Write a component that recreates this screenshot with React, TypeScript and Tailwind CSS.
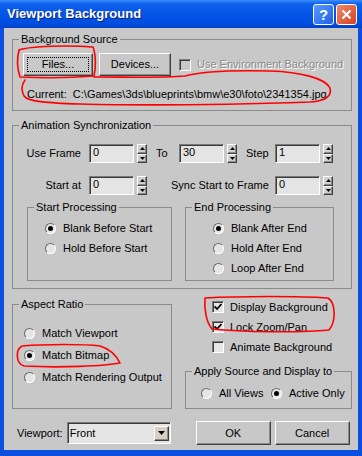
import React from 'react';

const sunken =
  'border border-t-[#7a7a7a] border-l-[#7a7a7a] border-b-white border-r-white shadow-[inset_1px_1px_0_#3a3a3a]';
const raised =
  'border border-t-white border-l-white border-b-[#404040] border-r-[#404040] shadow-[inset_-1px_-1px_0_#8a8a8a]';

function Group({ label, className, children }: { label: string; className?: string; children?: React.ReactNode }) {
  return (
    <div className={`relative border border-[#8a8a8a] ${className ?? ''}`}>
      <span className="absolute -top-[8px] left-[6px] px-[2px] bg-[#c8c8c8] leading-[14px]">{label}</span>
      {children}
    </div>
  );
}

function Arrow({ up }: { up?: boolean }) {
  return (
    <div className={`flex-1 flex items-center justify-center bg-[#d0d0d0] ${raised}`}>
      <svg width="5" height="3" viewBox="0 0 5 3">
        <path d={up ? 'M0 3 L2.5 0 L5 3 Z' : 'M0 0 L5 0 L2.5 3 Z'} fill="#000" />
      </svg>
    </div>
  );
}

function Spinner({ value }: { value: string }) {
  return (
    <div className="flex items-center gap-[3px]">
      <div className={`w-[45px] h-[19px] bg-[#e4e4e4] pl-[3px] leading-[14px] ${sunken}`}>{value}</div>
      <div className="w-[10px] h-[19px] flex flex-col">
        <Arrow up />
        <Arrow />
      </div>
    </div>
  );
}

function Radio({ label, on, className }: { label: string; on?: boolean; className?: string }) {
  return (
    <div className={`flex items-center shrink-0 h-[20px] ${className ?? ''}`}>
      <div className="w-[11px] h-[11px] rounded-full bg-[#e6e6e6] border border-t-[#6a6a6a] border-l-[#6a6a6a] border-b-white border-r-white flex items-center justify-center">
        {on && <div className="w-[5px] h-[5px] rounded-full bg-black" />}
      </div>
      <span className="ml-[7px]">{label}</span>
    </div>
  );
}

function Check({ label, on, disabled }: { label: string; on?: boolean; disabled?: boolean }) {
  return (
    <div className="flex items-center h-[20px]">
      <div className={`w-[12px] h-[12px] flex items-center justify-center ${disabled ? 'bg-[#c8c8c8]' : 'bg-[#e6e6e6]'} ${sunken}`}>
        {on && (
          <svg width="8" height="8" viewBox="0 0 8 8">
            <path d="M0.5 3.5 L3 6 L7.5 1" stroke="#000" strokeWidth="1.8" fill="none" />
          </svg>
        )}
      </div>
      <span
        className={`ml-[6px] ${disabled ? 'text-[#8a8a8a] [text-shadow:1px_1px_0_#fff]' : ''}`}
      >
        {label}
      </span>
    </div>
  );
}

function Btn({ label, w, h = 'h-[23px]', focus }: { label: string; w: string; h?: string; focus?: boolean }) {
  return (
    <div className={`${w} ${h} bg-[#c8c8c8] flex items-center justify-center p-[3px] ${raised}`}>
      <div className={`w-full h-full flex items-center justify-center ${focus ? 'border border-dotted border-black' : ''}`}>
        {label}
      </div>
    </div>
  );
}

export default function App() {
  return (
    <div className="relative w-[362px] h-[456px] flex flex-col whitespace-nowrap bg-[#0a4fe0] font-['Liberation_Sans',Arial,sans-serif] text-[11px] text-black">
      {/* title bar */}
      <div className="h-[28px] shrink-0 flex items-center pl-[7px] pr-[5px] bg-[linear-gradient(to_bottom,#3c8dff_0%,#0d5fec_14%,#0556e6_50%,#004de0_85%,#0040c4_100%)]">
        <span className="flex-1 text-white font-bold text-[13px] [text-shadow:1px_1px_0_#0a1f7a]">Viewport Background</span>
        <div className="w-[21px] h-[21px] rounded-[3px] border border-white bg-[linear-gradient(to_bottom_right,#5a9bff,#1f5fe8)] flex items-center justify-center text-white font-bold text-[15px] leading-none">?</div>
        <div className="ml-[2px] w-[21px] h-[21px] rounded-[3px] border border-white bg-[linear-gradient(to_bottom_right,#ee8a6a,#d8421e)] flex items-center justify-center">
          <svg width="11" height="11" viewBox="0 0 11 11">
            <path d="M1.5 1.5 L9.5 9.5 M9.5 1.5 L1.5 9.5" stroke="#fff" strokeWidth="2.2" />
          </svg>
        </div>
      </div>

      {/* body */}
      <div className="flex-1 mx-[4px] mb-[6px] bg-[#c8c8c8] pl-[8px] pr-[6px] pt-[11px] flex flex-col">
        <Group label="Background Source" className="h-[72px] pt-[13px] pl-[10px]">
          <div className="flex items-center">
            <Btn label="Files..." w="w-[70px]" focus />
            <div className="ml-[6px]">
              <Btn label="Devices..." w="w-[72px]" />
            </div>
            <div className="ml-[8px]">
              <Check label="Use Environment Background" disabled />
            </div>
          </div>
          <div className="mt-[12px] pl-[4px] leading-[13px] whitespace-pre">Current:  C:\Games\3ds\blueprints\bmw\e30\foto\2341354.jpg</div>
        </Group>

        <Group label="Animation Synchronization" className="mt-[14px] h-[164px] pt-[18px] pl-[7px]">
          <div className="flex items-center">
            <span className="w-[61px] text-right">Use Frame</span>
            <div className="ml-[8px]">
              <Spinner value="0" />
            </div>
            <span className="ml-[9px] w-[23px]">To</span>
            <Spinner value="30" />
            <span className="ml-[9px] w-[29px]">Step</span>
            <Spinner value="1" />
          </div>
          <div className="flex items-center mt-[13px]">
            <span className="w-[61px] text-right">Start at</span>
            <div className="ml-[8px]">
              <Spinner value="0" />
            </div>
            <span className="ml-[24px] w-[104px]">Sync Start to Frame</span>
            <Spinner value="0" />
          </div>
          <div className="flex mt-[12px] pl-[7px] gap-[13px]">
            <Group label="Start Processing" className="w-[145px] h-[74px] pt-[10px] pl-[17px]">
              <Radio label="Blank Before Start" on />
              <Radio label="Hold Before Start" />
            </Group>
            <Group label="End Processing" className="w-[149px] h-[74px] pt-[10px] pl-[27px]">
              <Radio label="Blank After End" on />
              <Radio label="Hold After End" />
              <Radio label="Loop After End" />
            </Group>
          </div>
        </Group>

        <div className="mt-[8px] flex items-start">
          <Group label="Aspect Ratio" className="mt-[7px] w-[161px] h-[105px] pt-[17px] pl-[11px]">
            <Radio label="Match Viewport" className="h-[22px]" />
            <Radio label="Match Bitmap" on className="h-[22px]" />
            <Radio label="Match Rendering Output" className="h-[22px]" />
          </Group>
          <div className="ml-[13px] flex flex-col">
            <div className="pl-[27px] flex flex-col">
              <Check label="Display Background" on />
              <Check label="Lock Zoom/Pan" on />
              <Check label="Animate Background" />
            </div>
            <Group label="Apply Source and Display to" className="mt-[14px] w-[167px] h-[38px] pt-[11px] pl-[15px]">
              <div className="flex">
                <Radio label="All Views" className="w-[70px]" />
                <Radio label="Active Only" on />
              </div>
            </Group>
          </div>
        </div>

        <div className="mt-[12px] flex items-center pl-[5px]">
          <span>Viewport:</span>
          <div className={`ml-[4px] w-[104px] h-[22px] bg-[#e4e4e4] flex items-center pl-[2px] pr-[1px] ${sunken}`}>
            <span className="flex-1">Front</span>
            <div className={`w-[15px] h-[15px] bg-[#d8d0c0] flex items-center justify-center ${raised}`}>
              <svg width="7" height="4" viewBox="0 0 7 4">
                <path d="M0 0 L7 0 L3.5 4 Z" fill="#000" />
              </svg>
            </div>
          </div>
          <div className="ml-[25px]">
            <Btn label="OK" w="w-[75px]" h="h-[24px]" />
          </div>
          <div className="ml-[4px]">
            <Btn label="Cancel" w="w-[75px]" h="h-[24px]" />
          </div>
        </div>
      </div>

      {/* red hand-drawn marks */}
      <svg className="absolute inset-0 pointer-events-none" width="362" height="456" viewBox="0 0 362 456">
        <g stroke="#ff0000" strokeWidth="1.6" fill="none" strokeLinecap="round" strokeLinejoin="round">
          <path d="M19 50 C30 46, 70 45, 93 47 C96 55, 96 68, 94 76 C70 78, 40 78, 20 77 C17 68, 17 58, 19 50 Z" />
          <path d="M94 77 C130 77, 160 78, 185 76 C200 72, 230 70, 270 71 C300 72, 325 78, 330 88 C332 96, 326 101, 310 102 C250 104, 160 106, 80 104 C50 103, 28 102, 24 96 C21 90, 22 84, 25 80" />
          <path d="M22 346 C45 344, 85 344, 100 346 C110 349, 116 355, 120 363 C105 366, 60 368, 24 366 C16 364, 15 350, 22 346" />
          <path d="M205 298 C240 296, 300 296, 328 298 C336 303, 336 322, 329 330 C300 333, 240 332, 212 329 C206 322, 204 308, 205 298" />
        </g>
      </svg>
    </div>
  );
}
